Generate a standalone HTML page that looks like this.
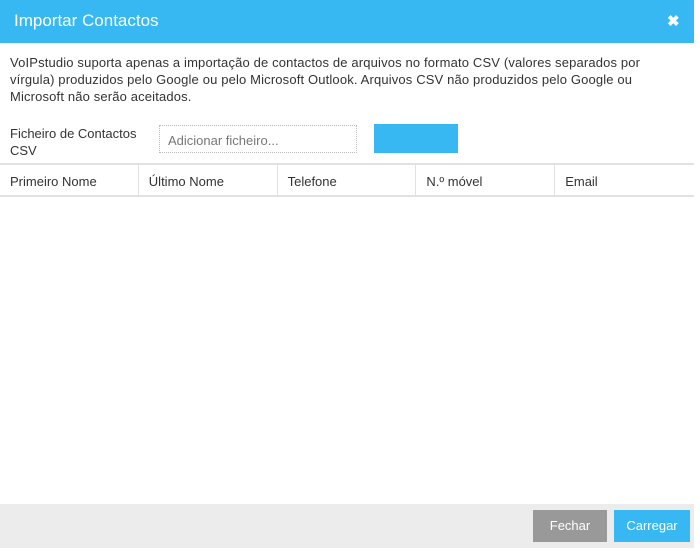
<!DOCTYPE html>
<html><head><style>
body{margin:0;width:700px;height:550px;background:#fff;font-family:"Liberation Sans",sans-serif;color:#333;position:relative;overflow:hidden}
.hdr{position:absolute;left:0;top:0;width:694px;height:43px;background:#38b8f2;color:#fff}
.hdr .t{position:absolute;left:14px;top:11px;font-size:17px}
.hdr .x{position:absolute;left:667px;top:12px;font-size:15px;font-weight:bold}
.p{position:absolute;left:10px;top:54px;width:690px;font-size:13px;line-height:17px;white-space:nowrap;letter-spacing:0.15px}
.lbl{position:absolute;left:10px;top:125px;font-size:13px;line-height:17px;width:140px;height:30px;overflow:hidden}
.inp{position:absolute;left:159px;top:125px;width:198px;height:28px;border:1px dotted #bbb;box-sizing:border-box;font-size:13px;color:#777;padding:7px 8px}
.btn{position:absolute;left:374px;top:124px;width:84px;height:29px;background:#38b8f2}
.th{position:absolute;left:0;top:163px;width:694px;height:34px;border-top:2px solid #e2e2e2;border-bottom:2px solid #e2e2e2;box-sizing:border-box;display:flex}
.th div{width:139px;border-right:1px solid #e2e2e2;font-size:13px;padding:9px 10px;box-sizing:border-box}
.th div:last-child{border-right:none}
.ft{position:absolute;left:0;top:504px;width:694px;height:44px;background:#ececec}
.b{position:absolute;top:6px;height:32px;color:#fff;font-size:13px;text-align:center;line-height:32px}
</style></head><body>
<div class="hdr"><span class="t">Importar Contactos</span><span class="x">✖</span></div>
<div class="p">VoIPstudio suporta apenas a importação de contactos de arquivos no formato CSV (valores separados por<br>vírgula) produzidos pelo Google ou pelo Microsoft Outlook. Arquivos CSV não produzidos pelo Google ou<br>Microsoft não serão aceitados.</div>
<div class="lbl">Ficheiro de Contactos CSV</div>
<div class="inp">Adicionar ficheiro...</div>
<div class="btn"></div>
<div class="th"><div>Primeiro Nome</div><div>Último Nome</div><div>Telefone</div><div>N.º móvel</div><div>Email</div></div>
<div class="ft">
<div class="b" style="left:533px;width:74px;background:#999">Fechar</div>
<div class="b" style="left:614px;width:76px;background:#38b8f2">Carregar</div>
</div>
</body></html>
